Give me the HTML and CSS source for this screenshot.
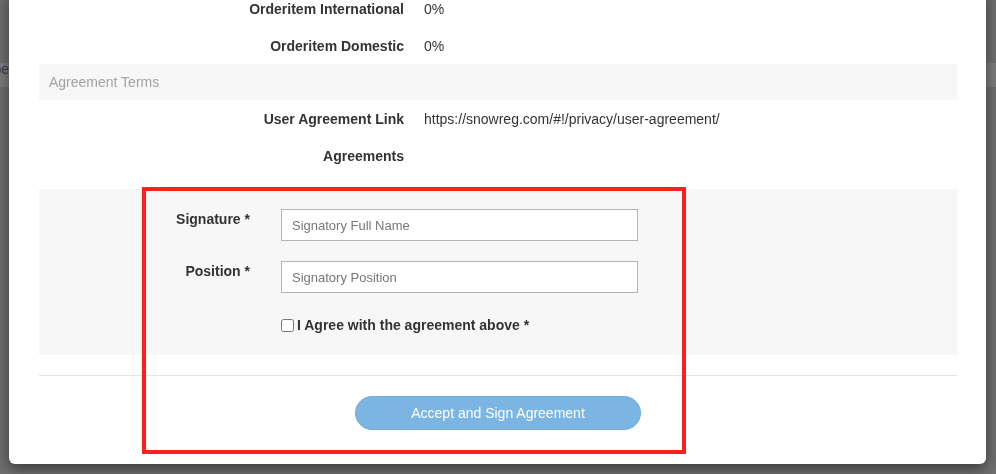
FILE: index.html
```html
<!DOCTYPE html>
<html lang="en">
<head>
    <meta charset="UTF-8">
    <meta name="viewport" content="width=device-width, initial-scale=1.0">
    <title>Sign Agreement</title>
    <link rel="stylesheet" href="styles.css">
</head>
<body>

<!-- page behind the modal -->
<div class="page">
    <div class="page-bar"><span class="page-cell">Type</span></div>
</div>

<div class="modal">
    <div class="modal-body">
        <div class="detail-row">
            <div class="detail-label">Orderitem International</div>
            <div class="detail-value">0%</div>
        </div>
        <div class="detail-row">
            <div class="detail-label">Orderitem Domestic</div>
            <div class="detail-value">0%</div>
        </div>
        <div class="section-title">Agreement Terms</div>
        <div class="detail-row">
            <div class="detail-label">User Agreement Link</div>
            <div class="detail-value">https://snowreg.com/#!/privacy/user-agreement/</div>
        </div>
        <div class="detail-row">
            <div class="detail-label">Agreements</div>
            <div class="detail-value"></div>
        </div>

        <form class="sign-panel" id="signForm">
            <label class="sign-label" for="signature">Signature *</label>
            <input type="text" id="signature" class="sign-input" placeholder="Signatory Full Name">

            <label class="sign-label" for="position">Position *</label>
            <input type="text" id="position" class="sign-input" placeholder="Signatory Position">

            <label class="agree-check">
                <input type="checkbox" id="agree"> I Agree with the agreement above *
            </label>
        </form>

        <div class="modal-footer">
            <button type="button" class="button-sign">Accept and Sign Agreement</button>
        </div>
    </div>
</div>

<div class="highlight"></div>

</body>
</html>
```

FILE: styles.css
```css
body {
    font-family: "Liberation Sans", Arial, Helvetica, sans-serif;
    font-size: 14px;
    margin: 0;
    padding: 0;
    height: 474px;
    overflow: hidden;
    background-color: #707070; /* page under the backdrop */
    color: #333333;
}

/* Page behind the backdrop */
.page {
    padding-top: 63px;
}
.page-bar {
    height: 24px;
    background-color: #7e7e7e;
}
.page-cell {
    display: block;
    width: 9px;
    overflow: hidden;
    direction: rtl;
    line-height: 12px;
    color: #3d3d3d;
}

/* Modal */
.modal {
    position: fixed;
    left: 9px;
    top: -10px;
    width: 977px;
    background-color: #ffffff;
    border-radius: 0 0 6px 6px;
    box-shadow: 0 5px 15px rgba(0, 0, 0, 0.5);
}
.modal-body {
    padding: 0 29px 34px 30px;
}

.detail-row {
    display: grid;
    grid-template-columns: 365px 1fr;
    column-gap: 20px;
    align-items: center;
    height: 37px;
}
.detail-label {
    text-align: right;
    font-weight: bold;
}
.section-title {
    height: 36px;
    line-height: 36px;
    padding-left: 10px;
    background-color: #f7f7f7;
    color: #a3a3a3;
}

/* Signature form */
.sign-panel {
    display: grid;
    grid-template-columns: 211px 357px;
    column-gap: 31px;
    row-gap: 20px;
    align-items: start;
    margin-top: 15px;
    padding: 20px 0;
    background-color: #f7f7f7;
}
.sign-label {
    text-align: right;
    font-weight: bold;
    line-height: 20px;
}
.sign-input {
    height: 32px;
    margin: 0;
    padding: 0 10px;
    border: 1px solid #b4b4b4;
    border-radius: 0;
    box-sizing: border-box;
    font-family: inherit;
    font-size: 13px;
    background-color: #ffffff;
}
.sign-input::placeholder {
    color: #777777;
}
.agree-check {
    grid-column: 2;
    display: flex;
    align-items: center;
    margin-top: 2px;
    line-height: 20px;
    font-weight: bold;
}
.agree-check input {
    width: 13px;
    height: 13px;
    margin: 0 3px 0 0;
}

/* Footer */
.modal-footer {
    margin-top: 20px;
    padding-top: 20px;
    border-top: 1px solid #e5e5e5;
    text-align: center;
}
.button-sign {
    width: 286px;
    height: 34px;
    border: 1px solid #6fadd9;
    border-radius: 17px;
    background-color: #7ab6e1;
    color: #ffffff;
    font-family: inherit;
    font-size: 14px;
    cursor: pointer;
}

/* Annotation frame drawn over the form */
.highlight {
    position: absolute;
    left: 142px;
    top: 187px;
    width: 544px;
    height: 267px;
    box-sizing: border-box;
    border: 4px solid #ff1f1f;
}
```
